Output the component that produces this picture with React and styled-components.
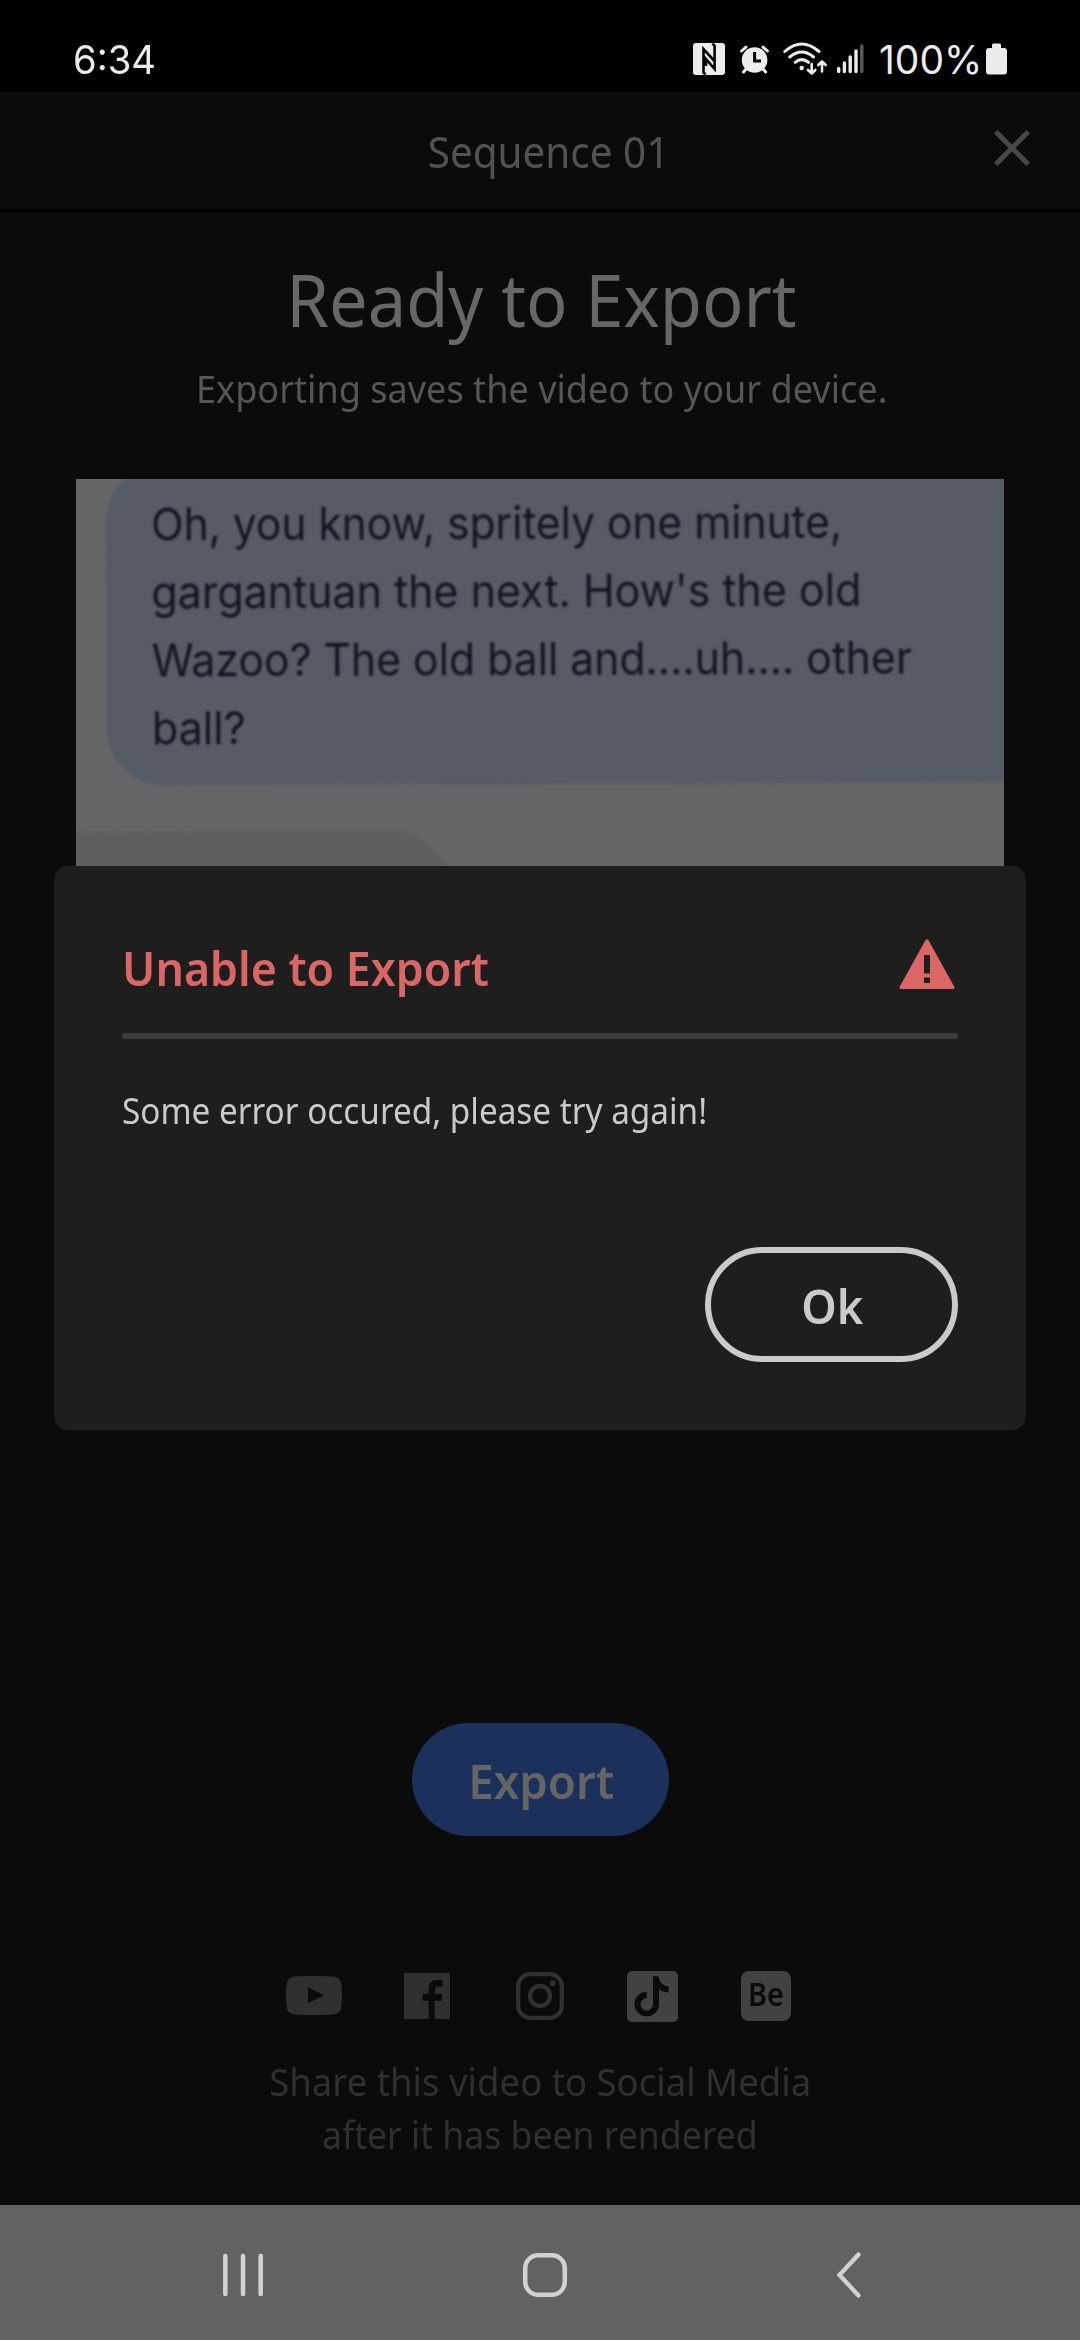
import React from 'react'
import styled, { createGlobalStyle } from 'styled-components'

const GlobalStyle = createGlobalStyle`
    * { box-sizing: border-box; }
    body {
        margin: 0;
        background: #0b0b0b;
        font-family: "Noto Sans", sans-serif;
    }
`;

const Screen = styled.div`
    position: relative;
    display: flex;
    flex-direction: column;
    width: 1080px;
    height: 2340px;
    overflow: hidden;
    background: #0b0b0b;
`;

// the app face is a bit narrower than Noto Sans
const Narrow = styled.span`
    display: block;
    width: max-content;
    white-space: nowrap;
    transform: scaleX(${props => props.$x || 0.94});
    transform-origin: ${props => props.$from || 'center'};
`;

/* ---------- status bar ---------- */

const StatusBar = styled.div`
    display: flex;
    align-items: center;
    height: 92px;
    padding: 26px 73px 0 73px;
    background: #000;
    color: #ececec;
    font-family: Inter, sans-serif;
    font-size: 39px;
    line-height: 66px;
`;

const Clock = styled.div`
    flex: 1;
    padding-top: 2px;
`;

const Percent = styled.div`
    width: 101px;
    margin: 0 6px 0 15px;
    padding-top: 2px;
`;

const StatusIcon = styled.svg`
    display: block;
    flex: none;
    margin-left: ${props => props.$gap || 0}px;
`;

/* ---------- header ---------- */

const Header = styled.header`
    display: grid;
    grid-template-columns: 86px 1fr 86px;
    align-items: center;
    height: 120px;
    border-bottom: 3px solid #000;
`;

const HeaderTitle = styled.div`
    display: flex;
    justify-content: center;
    padding: 3px 0 0 16px;
    color: #525252;
    font-size: 43px;
    line-height: 60px;
`;

const CloseButton = styled.button`
    width: 36px;
    height: 36px;
    margin: 0 0 5px;
    padding: 0;
    border: 0;
    background: none;

    svg { display: block; }
`;

/* ---------- page ---------- */

const Page = styled.main`
    display: flex;
    flex-direction: column;
    align-items: center;
    height: 1993px;
`;

const Heading = styled.h1`
    display: flex;
    justify-content: center;
    margin: 37px 0 0 2px;
    color: #676767;
    font-size: 73px;
    font-weight: 400;
    line-height: 100px;
`;

const SubHeading = styled.p`
    display: flex;
    justify-content: center;
    margin: 9px 0 0 3px;
    color: #565656;
    font-size: 39px;
    line-height: 60px;
`;

const Preview = styled.div`
    width: 928px;
    height: 522px;
    margin-top: 61px;
    overflow: hidden;
    background: #656567;
`;

const Frame = styled.div`
    display: flex;
    flex-direction: column;
    width: 960px;
    margin-top: -16px;
    filter: blur(0.8px);
    transform: rotate(-0.22deg);
`;

const Bubble = styled.div`
    height: 321px;
    margin-left: 31px;
    padding: 26px 0 0 45px;
    border-radius: 56px 0 0 56px;
    background: #575b63;
    color: #12161b;
    font-family: Inter, sans-serif;
    font-size: 45px;
    line-height: 68px;
`;

const Reply = styled.div`
    width: 378px;
    height: 200px;
    margin: 46px 0 0 -4px;
    border-radius: 0 60px 60px 0;
    background: #5f5f61;
`;

const ExportButton = styled.button`
    display: flex;
    justify-content: center;
    width: 257px;
    height: 113px;
    margin-top: 722px;
    padding: 2px 0 0 3px;
    border: 0;
    border-radius: 57px;
    background: #1b305a;
    color: #656565;
    font: 600 47px/113px "Noto Sans", sans-serif;
`;

const Social = styled.div`
    display: grid;
    grid-template-columns: repeat(5, 113px);
    place-items: center;
    height: 52px;
    margin: 134px 1px 0 0;
`;

const Behance = styled.div`
    display: flex;
    justify-content: center;
    width: 50px;
    height: 50px;
    border-radius: 8px;
    background: #424242;
    color: #0b0b0b;
    font-size: 32px;
    font-weight: 600;
    line-height: 46px;
`;

const ShareText = styled.div`
    display: flex;
    flex-direction: column;
    align-items: center;
    margin-top: 32px;
    color: #303030;
    font-size: 39px;
    line-height: 53px;
`;

/* ---------- dialog ---------- */

const Dialog = styled.section`
    position: absolute;
    top: 866px;
    left: 54px;
    display: flex;
    flex-direction: column;
    width: 972px;
    height: 564px;
    padding: 68px;
    border-radius: 14px;
    background: #1e1e1e;
    color: #cacaca;
`;

const DialogHead = styled.div`
    display: flex;
    justify-content: space-between;
    height: 99px;
    padding: 1px 3px 0 0;
`;

const DialogTitle = styled.h2`
    margin: 0;
    color: #db6666;
    font-size: 47px;
    font-weight: 600;
    line-height: 66px;
`;

const WarningIcon = styled.svg`
    margin-top: 4px;
`;

const Divider = styled.div`
    height: 6px;
    border-radius: 3px;
    background: #3a3a3a;
`;

const Message = styled.p`
    flex: 1;
    margin: 42px 0 0;
    font-size: 36px;
    line-height: 60px;
`;

const OkButton = styled.button`
    display: flex;
    align-items: center;
    justify-content: center;
    align-self: flex-end;
    width: 253px;
    height: 115px;
    padding: 3px 0 0 2px;
    border: 6px solid #cacaca;
    border-radius: 58px;
    background: none;
    color: #cacaca;
    font: 600 47px/60px "Noto Sans", sans-serif;
`;

/* ---------- system navigation ---------- */

const NavBar = styled.nav`
    display: flex;
    align-items: center;
    justify-content: space-between;
    height: 135px;
    padding: 5px 219px 0 221px;
    background: #626262;
`;

const HomeIcon = styled.svg`
    margin-right: 12px;
`;

const StatusIcons = () => (
    <>
        <StatusIcon width="32" height="32" viewBox="0 0 32 32">
            <rect width="32" height="32" rx="3" fill="#ececec" />
            <path d="M12.5 31.5 L10.5 29.5 V6 L21 17.5 M19.5 0.5 L21.6 3 V26 L13 16 V23" fill="none" stroke="#000" strokeWidth="2.6" />
        </StatusIcon>
        <StatusIcon $gap={15} width="29" height="29" viewBox="0 0 29 29">
            <circle cx="14.6" cy="15" r="12.8" fill="#ececec" />
            <path d="M1.6 6 L6 2 M27.4 6 L23 2 M6 24 L3.5 27 M23 24 L25.7 27" stroke="#ececec" strokeWidth="3" strokeLinecap="round" />
            <path d="M14.6 7 V16 H21" fill="none" stroke="#000" strokeWidth="3" />
        </StatusIcon>
        <StatusIcon $gap={14} width="46" height="34" viewBox="0 0 46 34">
            <g fill="none" stroke="#ececec" strokeWidth="3" strokeLinecap="round" strokeLinejoin="round">
                <path d="M1.8 9.5 Q18.7 -5.5 36 9.5 M6.8 15 Q18.7 5 30.5 15 M12.2 20.3 Q18.7 15 25.4 20.3" />
                <path d="M28.7 22 V31.5 M25 28 L28.7 31.5 L32.4 28 M39 29.5 V19.5 M35.3 23 L39 19.5 L42.7 23" strokeWidth="2.6" />
            </g>
            <circle cx="18.7" cy="26" r="2.2" fill="#ececec" />
        </StatusIcon>
        <StatusIcon $gap={7} width="28" height="30" viewBox="0 0 28 30">
            <path d="M2.7 24.5 V27.5 M8.4 19 V27.5 M14.2 13 V27.5 M20 7 V27.5" stroke="#ececec" strokeWidth="3.4" strokeLinecap="round" />
            <path d="M25.8 2 V27.5" stroke="#5a5a5a" strokeWidth="3.4" strokeLinecap="round" />
        </StatusIcon>
    </>
)

const SocialIcons = () => (
    <Social>
        <svg width="56" height="41" viewBox="0 0 56 41">
            <path fillRule="evenodd" fill="#303030" d="M9 .5 Q28 -.5 47 .5 Q55 1 55.5 9 Q56.5 19.5 55.5 30 Q55 38 47 38.5 Q28 39.5 9 38.5 Q1 38 .5 30 Q-.5 19.5 .5 9 Q1 1 9 .5Z M22 11.3 V27.3 L38 19.3Z" />
        </svg>
        <svg width="46" height="46" viewBox="0 0 46 46">
            <rect width="46" height="46" fill="#303030" />
            <path fill="#0b0b0b" d="M24.6 46 V27.7 H18.6 V20.7 H24.6 V16 C24.6 10 28 7 33 7 H38.6 V13.7 H35 C32 13.7 30.7 15 30.7 18 V20.7 H38.2 L37.8 27.7 H30.7 V46Z" />
        </svg>
        <svg width="48" height="48" viewBox="0 0 48 48" fill="none" stroke="#303030" strokeWidth="4.3">
            <rect x="2.15" y="2.15" width="43.7" height="43.7" rx="12" />
            <circle cx="24" cy="24" r="10" />
            <circle cx="36.8" cy="11.3" r="3" fill="#303030" stroke="none" />
        </svg>
        <svg width="51" height="51" viewBox="0 0 51 51">
            <rect width="51" height="51" rx="5" fill="#424242" />
            <path fill="#0b0b0b" d="M26 5.3 h5.7 c.3 5.5 4 9.6 9.9 10 v6.2 c-3.8 0 -7 -1.2 -9.6 -3.2 V33 a12.3 12.3 0 1 1 -12.3 -12.3 v6.3 a6.2 6.2 0 1 0 6.3 6Z" />
        </svg>
        <Behance><Narrow $x={0.9}>Be</Narrow></Behance>
    </Social>
)

const NavIcons = () => (
    <>
        <svg width="44" height="50" viewBox="0 0 44 50">
            <path d="M4.3 6 V44 M22 6 V44 M39.7 6 V44" stroke="#d2d2d2" strokeWidth="4.5" strokeLinecap="round" />
        </svg>
        <HomeIcon width="48" height="48" viewBox="0 0 48 48">
            <rect x="4.2" y="4.2" width="39.6" height="39.6" rx="13" fill="none" stroke="#d2d2d2" strokeWidth="4.5" />
        </HomeIcon>
        <svg width="24" height="48" viewBox="0 0 24 48">
            <path d="M21.5 3.5 L2.5 24 L21.5 44.5" fill="none" stroke="#d2d2d2" strokeWidth="4.3" strokeLinecap="round" />
        </svg>
    </>
)

export default function App() {
    return (
        <>
            <GlobalStyle />
            <Screen>
                <StatusBar>
                    <Clock><Narrow $x={0.98} $from="left">6:34</Narrow></Clock>
                    <StatusIcons />
                    <Percent><Narrow $x={1} $from="left">100%</Narrow></Percent>
                    <StatusIcon width="21" height="32" viewBox="0 0 21 32">
                        <path d="M6 2 Q6 0.5 7.5 0.5 H13.5 Q15 0.5 15 2 V5 H18 Q21 5 21 8 V28 Q21 31.5 18 31.5 H3 Q0 31.5 0 28 V8 Q0 5 3 5 H6Z" fill="#ececec" />
                    </StatusIcon>
                </StatusBar>

                <Header>
                    <span />
                    <HeaderTitle><Narrow>Sequence 01</Narrow></HeaderTitle>
                    <CloseButton aria-label="Close">
                        <svg width="36" height="36" viewBox="0 0 36 36">
                            <path d="M1.8 1.8 L34.2 34.2 M34.2 1.8 L1.8 34.2" stroke="#484848" strokeWidth="5" />
                        </svg>
                    </CloseButton>
                </Header>

                <Page>
                    <Heading><Narrow>Ready to Export</Narrow></Heading>
                    <SubHeading><Narrow $x={0.925}>Exporting saves the video to your device.</Narrow></SubHeading>
                    <Preview>
                        <Frame>
                            <Bubble>
                                <Narrow $x={0.943} $from="left">Oh, you know, spritely one minute,</Narrow>
                                <Narrow $x={0.954} $from="left">gargantuan the next. How's the old</Narrow>
                                <Narrow $x={0.948} $from="left">Wazoo? The old ball and....uh.... other</Narrow>
                                <Narrow $x={0.955} $from="left">ball?</Narrow>
                            </Bubble>
                            <Reply />
                        </Frame>
                    </Preview>
                    <ExportButton><Narrow $x={0.97}>Export</Narrow></ExportButton>
                    <SocialIcons />
                    <ShareText>
                        <Narrow $x={0.937}>Share this video to Social Media</Narrow>
                        <Narrow $x={0.912}>after it has been rendered</Narrow>
                    </ShareText>
                </Page>

                <NavBar><NavIcons /></NavBar>

                <Dialog>
                    <DialogHead>
                        <DialogTitle><Narrow $x={0.951} $from="left">Unable to Export</Narrow></DialogTitle>
                        <WarningIcon width="56" height="51" viewBox="0 0 56 51">
                            <path fillRule="evenodd" fill="#db6666" d="M26.6 1 Q28 -.5 29.4 1 L55.3 47.8 Q56 49.8 54 50 H2 Q0 49.8 .7 47.8Z M25 16 V34.5 H31 V16Z M25 38.5 V44 H31 V38.5Z" />
                        </WarningIcon>
                    </DialogHead>
                    <Divider />
                    <Message><Narrow $x={0.925} $from="left">Some error occured, please try again!</Narrow></Message>
                    <OkButton><Narrow $x={0.96}>Ok</Narrow></OkButton>
                </Dialog>
            </Screen>
        </>
    )
}
